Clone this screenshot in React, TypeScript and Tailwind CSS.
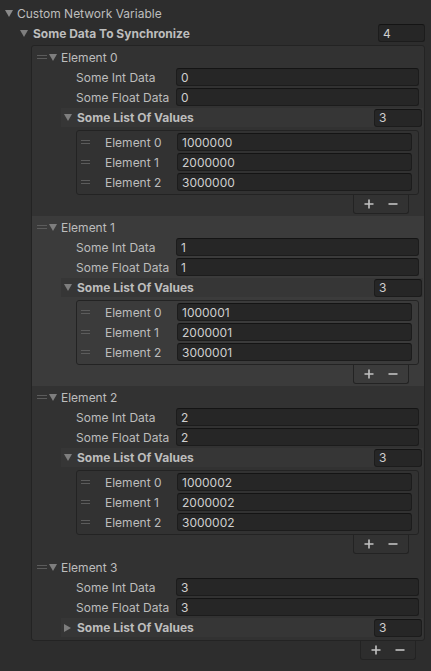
const font = { fontFamily: "Inter, 'Noto Sans', sans-serif" };

function TriDown({ color = "#8a8a8a" }: { color?: string }) {
  return (
    <svg width="8" height="7" viewBox="0 0 8 7" className="shrink-0">
      <polygon points="0,0 8,0 4,7" fill={color} />
    </svg>
  );
}

function TriRight({ color = "#8a8a8a" }: { color?: string }) {
  return (
    <svg width="7" height="8" viewBox="0 0 7 8" className="shrink-0">
      <polygon points="0,0 7,4 0,8" fill={color} />
    </svg>
  );
}

function Handle({ width = "w-[10px]" }: { width?: string }) {
  return (
    <div className={`flex ${width} shrink-0 flex-col gap-[2px]`}>
      <div className="h-px w-full bg-[#5c5c5c]" />
      <div className="h-px w-full bg-[#5c5c5c]" />
    </div>
  );
}

function Field({ value, className }: { value: string; className: string }) {
  return (
    <div
      className={`flex h-[18px] items-center rounded-[3px] border border-[#1c1c1c] border-t-[#141414] bg-[#262626] pl-[4px] pt-[1px] text-[#cfcfcf] ${className}`}
    >
      {value}
    </div>
  );
}

function Footer({ className }: { className: string }) {
  return (
    <div
      className={`flex h-[19px] w-[56px] items-center justify-center gap-[14px] rounded-b-[3px] border-x border-b border-[#232323] ${className}`}
    >
      <svg width="10" height="10" viewBox="0 0 10 10">
        <path d="M5 0.5v9M0.5 5h9" stroke="#c2c2c2" strokeWidth="1.6" />
      </svg>
      <svg width="10" height="10" viewBox="0 0 10 10">
        <path d="M0.5 5h9" stroke="#c2c2c2" strokeWidth="1.6" />
      </svg>
    </div>
  );
}

function Element({
  index,
  highlighted,
  expanded,
}: {
  index: number;
  highlighted?: boolean;
  expanded: boolean;
}) {
  const values = [1000000, 2000000, 3000000].map((v) => String(v + index));

  return (
    <div
      className={`flex flex-col pt-[1px] ${expanded ? "h-[170px]" : "h-[84px]"} ${
        highlighted ? "bg-[#3b3b3b]" : ""
      }`}
    >
      <div className="flex h-[20px] items-center pl-[5px]">
        <Handle />
        <div className="ml-[2px]">
          <TriDown color="#7e7e7e" />
        </div>
        <span className="ml-[4px] pt-[1px]">Element {index}</span>
      </div>

      {["Some Int Data", "Some Float Data"].map((label) => (
        <div key={label} className="flex h-[20px] items-center pl-[44px]">
          <span className="w-[100px] shrink-0 pt-[1px]">{label}</span>
          <Field value={String(index)} className="w-[243px]" />
        </div>
      ))}

      <div className="ml-[29px] mt-[1px] flex h-[19px] w-[362px] items-center bg-[#363636] pl-[3px]">
        <div className="flex w-[10px] justify-start">
          {expanded ? <TriDown color="#7e7e7e" /> : <TriRight color="#7e7e7e" />}
        </div>
        <span className="ml-[3px] w-[297px] pt-[1px] font-bold">Some List Of Values</span>
        <Field value="3" className="w-[48px]" />
      </div>

      {expanded ? (
        <div className="ml-[44px] mt-[3px] flex w-[343px] flex-col">
          <div className="flex flex-col rounded-[3px] border border-[#232323] pb-[2px] pt-[1px]">
            {values.map((v, i) => (
              <div key={i} className="flex h-[20px] items-center pl-[4px]">
                <Handle width="w-[9px]" />
                <span className="ml-[15px] w-[72px] shrink-0 pt-[1px]">Element {i}</span>
                <Field value={v} className="w-[235px]" />
              </div>
            ))}
          </div>
          <Footer className="mr-[10px] self-end" />
        </div>
      ) : null}
    </div>
  );
}

export default function App() {
  return (
    <div
      className="h-[671px] w-[431px] overflow-hidden bg-[#2d2d2d] pt-[3px] text-[12px] text-[#bdbdbd]"
      style={font}
    >
      <div className="flex h-[20px] items-center pl-[5px]">
        <TriDown />
        <span className="ml-[4px] pt-[1px]">Custom Network Variable</span>
      </div>

      <div className="flex h-[20px] items-center pl-[20px]">
        <TriDown color="#7e7e7e" />
        <span className="ml-[5px] w-[345px] pt-[1px] font-bold">Some Data To Synchronize</span>
        <Field value="4" className="w-[47px]" />
      </div>

      <div className="ml-[31px] mt-[2px] flex w-[394px] flex-col">
        <div className="flex flex-col rounded-[3px] border border-[#232323] bg-[#323232]">
          <Element index={0} expanded />
          <Element index={1} expanded highlighted />
          <Element index={2} expanded />
          <Element index={3} expanded={false} />
        </div>
        <Footer className="mr-[9px] self-end" />
      </div>
    </div>
  );
}
